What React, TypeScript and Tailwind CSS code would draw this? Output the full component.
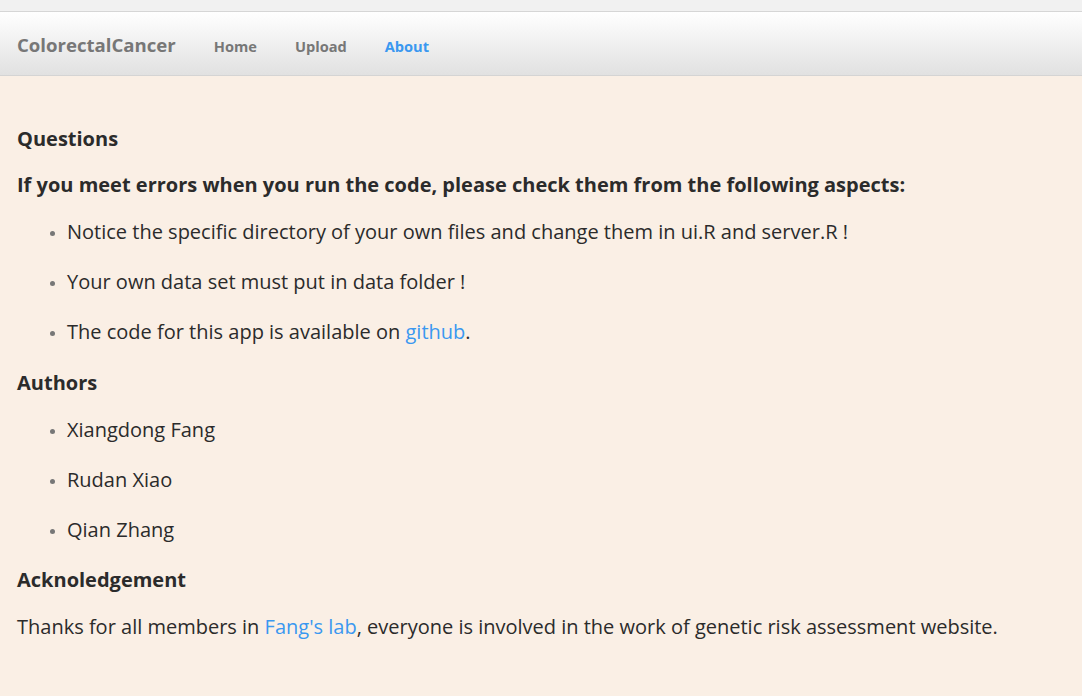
const links = ["Home", "Upload", "About"];

// About page of the ColorectalCancer shiny app
const App: React.FC = () => {
    return (
        <div className="min-h-[696px] bg-[#faefe5] text-[#2b2b2b]" style={{ fontFamily: '"Open Sans", "Liberation Sans", sans-serif' }}>
            {/* Browser strip above the navbar */}
            <div className="h-[12px] bg-[#f1f1f1] border-b border-[#d6d6d6]" />

            {/* Navbar */}
            <nav className="h-[64px] flex items-center px-[17px] pt-[5px] bg-gradient-to-b from-[#ffffff] to-[#e1e1e1] border-b border-[#d4d4d4]">
                <span className="text-[18.6px] font-bold text-[#777777] mr-[38px] mb-[3px]">ColorectalCancer</span>
                <section className="flex items-center gap-[38px] pt-[2px]">
                    {links.map((link) => (
                        <a
                            key={link}
                            href="#"
                            className={link === "About" ? "text-[14.6px] font-bold text-[#3a98f0]" : "text-[14.6px] font-bold text-[#777777]"}
                        >
                            {link}
                        </a>
                    ))}
                </section>
            </nav>

            {/* Content */}
            <main className="px-[17px] pt-[50px] text-[20px]">
                <h4 className="font-bold text-[20px] leading-[26px]">Questions</h4>
                <h4 className="font-bold text-[20px] leading-[26px] mt-[20px]">
                    If you meet errors when you run the code, please check them from the following aspects:
                </h4>
                <ul className="mt-[9px] pl-[50px] list-disc marker:text-[#777777] marker:text-[14px]">
                    <li className="leading-[28px] py-[11px]">Notice the specific directory of your own files and change them in ui.R and server.R !</li>
                    <li className="leading-[28px] py-[11px]">Your own data set must put in data folder !</li>
                    <li className="leading-[28px] py-[11px]">
                        The code for this app is available on <a href="#" className="text-[#3a98f0]">github</a>.
                    </li>
                </ul>

                <h4 className="font-bold text-[20px] leading-[26px] mt-[13px]">Authors</h4>
                <ul className="mt-[9px] pl-[50px] list-disc marker:text-[#777777] marker:text-[14px]">
                    <li className="leading-[28px] py-[11px]">Xiangdong Fang</li>
                    <li className="leading-[28px] py-[11px]">Rudan Xiao</li>
                    <li className="leading-[28px] py-[11px]">Qian Zhang</li>
                </ul>

                <h4 className="font-bold text-[20px] leading-[26px] mt-[12px]">Acknoledgement</h4>
                <p className="leading-[28px] mt-[20px]">
                    Thanks for all members in <a href="#" className="text-[#3a98f0]">Fang's lab</a>, everyone is involved in the work of genetic risk assessment website.
                </p>
            </main>
        </div>
    );
};

export default App;
